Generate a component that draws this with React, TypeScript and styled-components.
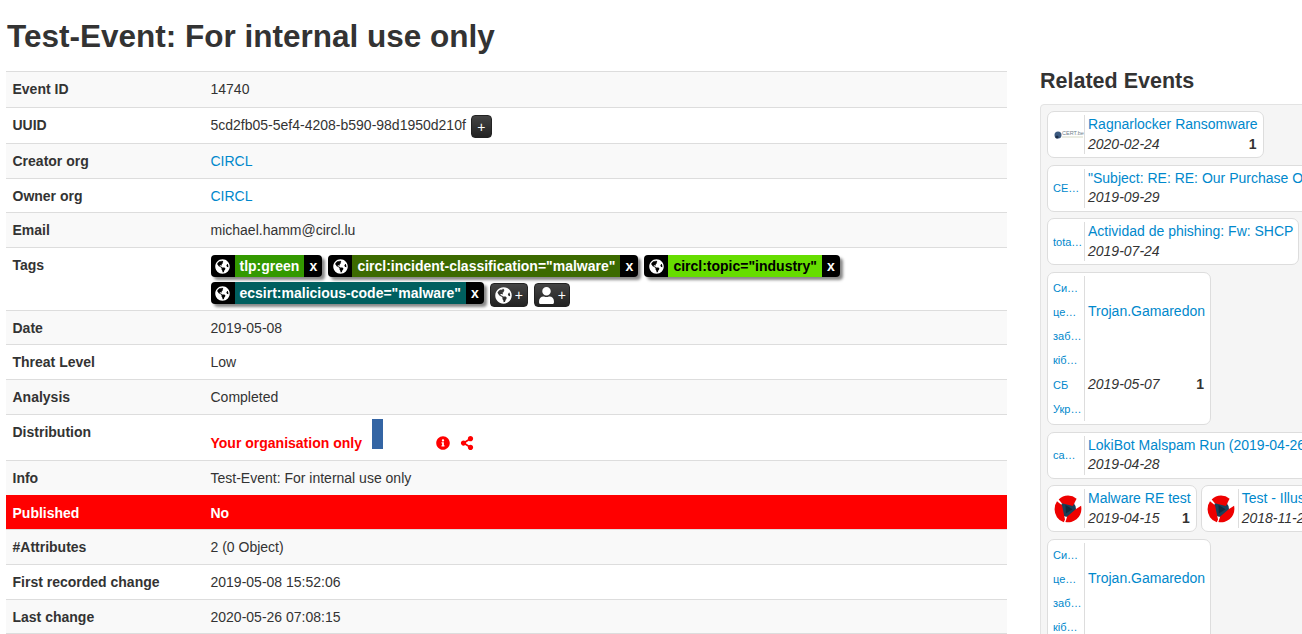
import React, { FC, ReactNode } from 'react'
import styled, { createGlobalStyle } from 'styled-components'
import { FaGlobeAmericas, FaInfoCircle, FaShareAlt, FaUser } from 'react-icons/fa'

const Global = createGlobalStyle`
    html, body { margin: 0; padding: 0; height: 100%; overflow: hidden; background: #fff; }
    body { font-family: "Liberation Sans", Arial, sans-serif; font-size: 14px; color: #333; }
    a { color: #0088cc; text-decoration: none; }
`

const Page = styled.div`
    display: grid;
    grid-template-columns: 1001px 500px;
    column-gap: 33px;
    width: 1534px;
    height: 634px;
    padding-left: 6px;
    overflow: hidden;
`
const Main = styled.main`
    min-width: 0;
`
const Title = styled.h2`
    margin: 0;
    padding: 16px 0 14px 1px;
    font-size: 31.5px;
    line-height: 41px;
    font-weight: bold;
`
const MetaTable = styled.div`
    display: flex;
    flex-direction: column;
`
const Row = styled.div<{ $h: number; $alert?: boolean }>`
    display: grid;
    grid-template-columns: 198px 1fr;
    box-sizing: border-box;
    height: ${p => p.$h}px;
    padding-top: 7px;
    border-top: 1px solid #ddd;
    line-height: 20px;
    padding-left: 6.5px;
    background: #fff;
    &:nth-child(odd) { background: #f9f9f9; }
    ${p => p.$alert ? '&&{background:#f00;color:#fff;border-top-color:#f00;font-weight:bold;}' : ''}
    &:last-child { border-bottom: 1px solid #ddd; }
`
const Label = styled.div`
    font-weight: bold;
`
const Value = styled.div`
    min-width: 0;
`
const CopyBtn = styled.button`
    display: inline-flex;
    align-items: flex-end;
    justify-content: center;
    box-sizing: border-box;
    width: 21px;
    height: 23px;
    margin-left: 5px;
    padding: 0 0 2px;
    vertical-align: top;
    border: 1px solid #222;
    border-radius: 4px;
    background: linear-gradient(#444, #222);
    color: #fff;
    font: 14px/16px "Liberation Sans", Arial, sans-serif;
`
const TagWrap = styled.div`
    display: flex;
    flex-wrap: wrap;
    gap: 2px 6px;
    width: 660px;
`
const Tag = styled.span`
    display: inline-flex;
    height: 22px;
    border-radius: 4px;
    overflow: hidden;
    box-shadow: 3px 3px 3px #888;
    font-weight: bold;
    line-height: 22px;
    background: #000;
    color: #fff;
`
const TagIcon = styled.span`
    display: flex;
    align-items: center;
    justify-content: center;
    width: 24px;
    font-size: 15px;
`
const TagName = styled.span<{ $bg: string; $fg?: string }>`
    padding: 0 5px;
    background: ${p => p.$bg};
    color: ${p => p.$fg || '#fff'};
`
const TagX = styled.span`
    width: 18px;
    text-align: center;
`
const AddBtn = styled.button<{ $w: number }>`
    display: inline-flex;
    align-items: center;
    justify-content: center;
    gap: 3px;
    box-sizing: border-box;
    width: ${p => p.$w}px;
    height: 24px;
    margin: 1px 0 0 0;
    padding: 0;
    border: 1px solid #222;
    border-radius: 4px;
    background: linear-gradient(#444, #222);
    color: #fff;
    font: 14px/16px "Liberation Sans", Arial, sans-serif;
    svg { font-size: 17px; }
`
const DistLine = styled.div`
    display: flex;
    align-items: flex-end;
    height: 30px;
    margin-top: -3px;
    color: #f00;
    font-weight: bold;
`
const DistName = styled.span`
    line-height: 18px;
    margin-bottom: -3px;
`
const DistBar = styled.span`
    width: 11px;
    height: 30px;
    margin-left: 10px;
    background: #3465a4;
`
const DistIcon = styled.span<{ $ml: number }>`
    display: flex;
    margin-left: ${p => p.$ml}px;
    margin-bottom: -1px;
    font-size: 14px;
`

const Side = styled.aside`
    min-width: 0;
`
const SideTitle = styled.h3`
    margin: 0;
    padding-top: 69px;
    font-size: 21.5px;
    line-height: 25px;
    font-weight: bold;
`
const Well = styled.div`
    display: flex;
    flex-direction: column;
    align-items: flex-start;
    gap: 6.6px;
    box-sizing: border-box;
    margin-top: 10px;
    padding: 6px;
    height: 700px;
    border: 1px solid #e3e3e3;
    border-radius: 4px;
    background: #f5f5f5;
`
const CardRow = styled.div`
    display: flex;
    gap: 4px;
`
const Card = styled.div`
    display: flex;
    flex-shrink: 0;
    box-sizing: border-box;
    padding: 3px 5px 3px 3px;
    border: 1px solid #ddd;
    border-radius: 7px;
    background: #fff;
`
const OrgCell = styled.div`
    display: flex;
    flex-direction: column;
    justify-content: center;
    box-sizing: border-box;
    flex-shrink: 0;
    width: 34px;
    min-height: 39px;
    padding: 0 0 0 2px;
    border-right: 1px solid #ddd;
`
const OrgLine = styled.a`
    display: block;
    height: 24.2px;
    font-size: 11px;
    line-height: 24px;
    white-space: nowrap;
`
const Logo = styled.div`
    display: flex;
    align-items: center;
    justify-content: center;
    margin-left: -2px;
`
const CardBody = styled.div`
    display: grid;
    grid-auto-rows: 1fr;
    padding-left: 3px;
    align-items: center;
`
const CardTitle = styled.a`
    display: block;
    line-height: 19.5px;
    white-space: nowrap;
`
const CardMeta = styled.div`
    display: flex;
    justify-content: space-between;
    line-height: 19.5px;
`
const CardDate = styled.span`
    font-style: italic;
`
const CardCount = styled.span`
    font-weight: bold;
    padding-right: 1px;
`

const CertLogo: FC = () => (
    <svg width="32" height="20" viewBox="0 0 32 20">
        <circle cx="6" cy="10" r="3.5" fill="#3c5a80" />
        <circle cx="5" cy="12" r="1.6" fill="#1d2f4a" />
        <text x="10" y="10" fontSize="5.5" fill="#6f7f8c" fontFamily="Liberation Sans">CERT.be</text>
        <rect x="10" y="11.5" width="21" height="1" fill="#d8dcc8" />
    </svg>
)

const ShieldLogo: FC = () => (
    <svg width="28" height="28" viewBox="0 0 28 28">
        <circle cx="14" cy="14" r="8" fill="#17405a" />
        <path d="M14 .6a13.4 13.4 0 0 1 8.6 3.1L18.9 11 7.8 8.2 4.7 4.4A13.4 13.4 0 0 1 14 .6z" fill="#ee0000" />
        <path d="M.6 14a13.4 13.4 0 0 1 2.4-7.7L8 10.2l3 14.4-1.2 2.7A13.4 13.4 0 0 1 .6 14z" fill="#ee0000" />
        <path d="M27.4 14a13.4 13.4 0 0 1-16 13.1l1.8-5.5 8.8-7.7 5.1-3.2c.2 1.1.3 2.2.3 3.3z" fill="#ee0000" />
        <path d="M11.5 10l7 4.2-6.6 4.4z" fill="#0e2a3d" />
    </svg>
)

interface TypeEvent {
    org: ReactNode
    title: string
    date: string
    count?: number
}

const EventCard: FC<TypeEvent> = ({ org, title, date, count }) => (
    <Card>
        <OrgCell>{org}</OrgCell>
        <CardBody>
            <CardTitle href="#">{title}</CardTitle>
            <CardMeta>
                <CardDate>{date}</CardDate>
                {count ? <CardCount>{count}</CardCount> : null}
            </CardMeta>
        </CardBody>
    </Card>
)

const orgLines = (names: string[]) => names.map((n, i) => <OrgLine key={i} href="#">{n}</OrgLine>)
const gamaredonOrgs = ['Си…', 'це…', 'заб…', 'кіб…', 'СБ', 'Укр…']

const tag = (name: string, bg: string, fg?: string) => (
    <Tag>
        <TagIcon><FaGlobeAmericas /></TagIcon>
        <TagName $bg={bg} $fg={fg}>{name}</TagName>
        <TagX>x</TagX>
    </Tag>
)

const App: FC = () => (
    <Page>
        <Global />
        <Main>
            <Title>Test-Event: For internal use only</Title>
            <MetaTable>
                <Row $h={36}><Label>Event ID</Label><Value>14740</Value></Row>
                <Row $h={36}>
                    <Label>UUID</Label>
                    <Value>5cd2fb05-5ef4-4208-b590-98d1950d210f<CopyBtn>+</CopyBtn></Value>
                </Row>
                <Row $h={35}><Label>Creator org</Label><Value><a href="#">CIRCL</a></Value></Row>
                <Row $h={34}><Label>Owner org</Label><Value><a href="#">CIRCL</a></Value></Row>
                <Row $h={35}><Label>Email</Label><Value>michael.hamm@circl.lu</Value></Row>
                <Row $h={63}>
                    <Label>Tags</Label>
                    <TagWrap>
                        {tag('tlp:green', '#339900')}
                        {tag('circl:incident-classification="malware"', '#3c6a00')}
                        {tag('circl:topic="industry"', '#66dd00', '#000')}
                        {tag('ecsirt:malicious-code="malware"', '#005f5f')}
                        <AddBtn $w={38}><FaGlobeAmericas />+</AddBtn>
                        <AddBtn $w={36}><FaUser />+</AddBtn>
                    </TagWrap>
                </Row>
                <Row $h={34}><Label>Date</Label><Value>2019-05-08</Value></Row>
                <Row $h={35}><Label>Threat Level</Label><Value>Low</Value></Row>
                <Row $h={35}><Label>Analysis</Label><Value>Completed</Value></Row>
                <Row $h={46}>
                    <Label>Distribution</Label>
                    <DistLine>
                        <DistName>Your organisation only</DistName>
                        <DistBar />
                        <DistIcon $ml={53}><FaInfoCircle /></DistIcon>
                        <DistIcon $ml={10}><FaShareAlt /></DistIcon>
                    </DistLine>
                </Row>
                <Row $h={35}><Label>Info</Label><Value>Test-Event: For internal use only</Value></Row>
                <Row $h={34} $alert><Label>Published</Label><Value>No</Value></Row>
                <Row $h={35}><Label>#Attributes</Label><Value>2 (0 Object)</Value></Row>
                <Row $h={35}><Label>First recorded change</Label><Value>2019-05-08 15:52:06</Value></Row>
                <Row $h={35}><Label>Last change</Label><Value>2020-05-26 07:08:15</Value></Row>
            </MetaTable>
        </Main>
        <Side>
            <SideTitle>Related Events</SideTitle>
            <Well>
                <EventCard org={<Logo><CertLogo /></Logo>} title="Ragnarlocker Ransomware" date="2020-02-24" count={1} />
                <EventCard org={orgLines(['CE…'])} title={'"Subject: RE: RE: Our Purchase Order'} date="2019-09-29" />
                <EventCard org={orgLines(['tota…'])} title="Actividad de phishing: Fw: SHCP" date="2019-07-24" />
                <EventCard org={orgLines(gamaredonOrgs)} title="Trojan.Gamaredon" date="2019-05-07" count={1} />
                <EventCard org={orgLines(['ca…'])} title="LokiBot Malspam Run (2019-04-26)" date="2019-04-28" />
                <CardRow>
                    <EventCard org={<Logo><ShieldLogo /></Logo>} title="Malware RE test" date="2019-04-15" count={1} />
                    <EventCard org={<Logo><ShieldLogo /></Logo>} title="Test - Illustration of sharing" date="2018-11-26" />
                </CardRow>
                <EventCard org={orgLines(gamaredonOrgs)} title="Trojan.Gamaredon" date="2019-05-07" count={1} />
            </Well>
        </Side>
    </Page>
)

export default App
